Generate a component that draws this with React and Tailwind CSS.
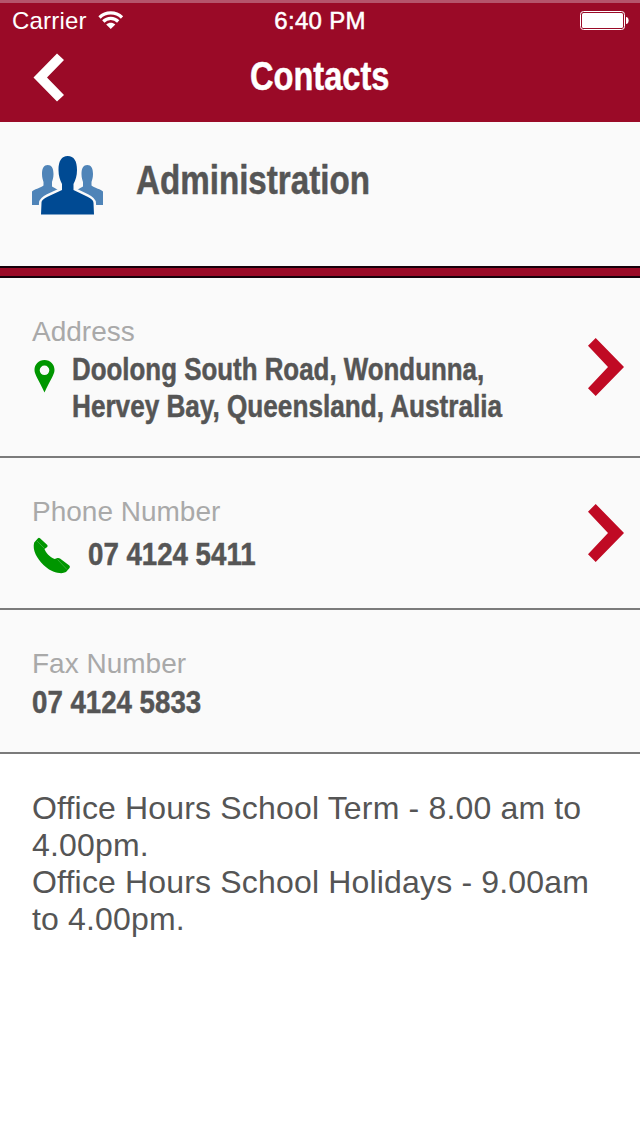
import React from 'react'

const bold = 'block w-max origin-left whitespace-nowrap font-bold [-webkit-text-stroke:0.5px]'

const ChevronRight = () => (
  <svg width="38" height="60" viewBox="0 0 38 60" className="shrink-0">
    <path d="M9.700 1L38 30L9.700 59L2 51.300L22 30L2 8.700Z" fill="#c00a24" />
  </svg>
)

const StatusBar = () => (
  <div className="flex h-[37px] items-start border-t-[3px] border-[#b5546b] px-3 text-[24px] leading-[36px]">
    <div className="flex flex-1 items-start">
      <span className="w-[75px] tracking-[0.2px] whitespace-nowrap">Carrier</span>
      <svg width="26" height="19" viewBox="0 0 26 19" className="mt-2 ml-[11px]" fill="none" stroke="#fff" strokeWidth="3.2">
        <path d="M1.500 6.500A16 16 0 0 1 24 6.500" />
        <path d="M5.300 10.500A10.500 10.500 0 0 1 20.200 10.500" />
        <path d="M12.750 18L8.200 13.500C10.800 11.100 14.700 11.100 17.300 13.500Z" fill="#fff" stroke="none" />
      </svg>
    </div>
    <span className="tracking-[0.3px] [-webkit-text-stroke:0.5px]">6:40 PM</span>
    <div className="flex flex-1 justify-end">
      <svg width="49" height="19" viewBox="0 0 49 19" className="mt-2 -mr-[1px]">
        <rect x="0.5" y="0.5" width="44" height="18" rx="3" fill="none" stroke="#fff" />
        <rect x="2" y="2" width="41" height="15" rx="1.5" fill="#fff" />
        <path d="M46 6C49.500 6 49.500 13 46 13Z" fill="#fff" />
      </svg>
    </div>
  </div>
)

const Header = () => (
  <header className="h-[122px] bg-[#9a0a27] text-white">
    <StatusBar />
    <div className="flex h-20 items-center pl-[33px]">
      <svg width="31" height="50" viewBox="0 0 31 50" className="shrink-0">
        <path d="M24 1.500L31 8L14 25.500L31 43L24 49.500L0.500 25.500Z" fill="#fff" />
      </svg>
      <h1 className={`${bold} mb-0.5 ml-[186px] scale-x-[0.815] text-[40px] leading-[44px]`}>Contacts</h1>
    </div>
  </header>
)

const People = () => (
  <svg width="71" height="59" viewBox="0 0 71 59" className="shrink-0">
    <g fill="#4f84b8">
      <path d="M10 18C10 12 12 9 15.700 9C19.500 9 21.500 12 21.500 18C21.500 22 20.500 24 20 26V30.500L28 35V49H0V35.500C2 33 8 32.500 11.500 29.500V26C11 24 10 22 10 18Z" />
      <path d="M61 18C61 12 59 9 55.300 9C51.500 9 49.500 12 49.500 18C49.500 22 50.500 24 51 26V30.500L43 35V49H71V35.500C69 33 63 32.500 59.500 29.500V26C60 24 61 22 61 18Z" />
    </g>
    <path
      d="M26.500 14C26.500 5 29.500 0 35.700 0C42 0 45 5 45 14C45 20 43.500 24 41.500 28V34L55 40.500C59 42.500 61.500 44 61.500 47L62 58.500H9L9.500 47C9.500 44 12 42.500 16 40.500L30 34V28C28 24 26.500 20 26.500 14Z"
      fill="#004a93"
      stroke="#fafafa"
      strokeWidth="5"
      paintOrder="stroke"
    />
  </svg>
)

const Label = ({ children }) => (
  <div className="text-[28px] leading-8 text-[#a9a9a9]">{children}</div>
)

const App = () => (
  <div className="min-h-[1136px] w-[640px] overflow-hidden bg-white font-['Liberation_Sans',Arial,sans-serif] text-[#555555]">
    <Header />

    <section className="flex h-36 items-start bg-[#fafafa] pt-[34px] pl-8">
      <People />
      <h2 className={`${bold} ml-[33px] scale-x-[0.829] text-[40px] leading-[48px]`}>Administration</h2>
    </section>
    <div className="h-3 border-y-2 border-[#16000a] bg-[#9a0a27]" />

    <section className="flex h-[180px] items-start justify-between border-b-2 border-[#7b7b7b] bg-[#fafafa] pt-[38px] pr-4 pl-8">
      <div className="w-[500px]">
        <Label>Address</Label>
        <div className="flex items-start pt-[3px]">
          <svg width="21" height="33" viewBox="0 0 21 33" className="mt-[9px] ml-[2px] shrink-0">
            <path fillRule="evenodd" d="M10.500 0C4.500 0 .5 4.500 .5 10C.5 15 5 20 10.500 32.500C16 20 20.500 15 20.500 10C20.500 4.500 16.500 0 10.500 0ZM10.500 5.500A4.800 4.800 0 1 1 10.500 15.100A4.800 4.800 0 1 1 10.500 5.500Z" fill="#009600" />
          </svg>
          <div className="ml-[17px] w-[430px] text-[32px] leading-[37px]">
            <span className={`${bold} scale-x-[0.809]`}>Doolong South Road, Wondunna,</span>
            <span className={`${bold} scale-x-[0.817]`}>Hervey Bay, Queensland, Australia</span>
          </div>
        </div>
      </div>
      <div className="pt-[21px]"><ChevronRight /></div>
    </section>

    <section className="flex h-[152px] items-start justify-between border-b-2 border-[#7b7b7b] bg-[#fafafa] pt-[38px] pr-4 pl-8">
      <div>
        <Label>Phone Number</Label>
        <div className="flex items-start pt-[8px]">
          <svg width="39" height="37" viewBox="0 0 39 37" className="mt-px shrink-0">
            <path d="M2.200 5.500L6 1.200Q7 .4 8 1.300L15.300 8Q16 9 15.200 10L12.500 12C13.500 15.500 18 20.500 22.700 22L25.500 21Q26.700 20.600 28 21.500L37.300 28.500Q38.500 29.500 37.500 31L34 35Q31 36.500 27.500 36C22 35.500 16 32.500 11.500 28C5 21.500 0 13 2.200 5.500Z" fill="#009600" />
            <path d="M5 4L12.500 11.500M25.500 22.500L35 32.500" stroke="#5cb85c" strokeWidth="0.6" />
          </svg>
          <div className={`${bold} ml-[17px] scale-x-[0.864] text-[32px] leading-[37px]`}>07 4124 5411</div>
        </div>
      </div>
      <div className="pt-[7px]"><ChevronRight /></div>
    </section>

    <section className="h-36 border-b-2 border-[#7b7b7b] bg-[#fafafa] pt-[38px] pl-8">
      <Label>Fax Number</Label>
      <div className={`${bold} scale-x-[0.864] pt-1 text-[32px] leading-[37px]`}>07 4124 5833</div>
    </section>

    <section className="px-8 pt-[36px] text-[32px] leading-[37px] tracking-[0.17px] whitespace-nowrap">
      <div>Office Hours School Term - 8.00 am to</div>
      <div>4.00pm.</div>
      <div>Office Hours School Holidays - 9.00am</div>
      <div>to 4.00pm.</div>
    </section>
  </div>
)

export default App
